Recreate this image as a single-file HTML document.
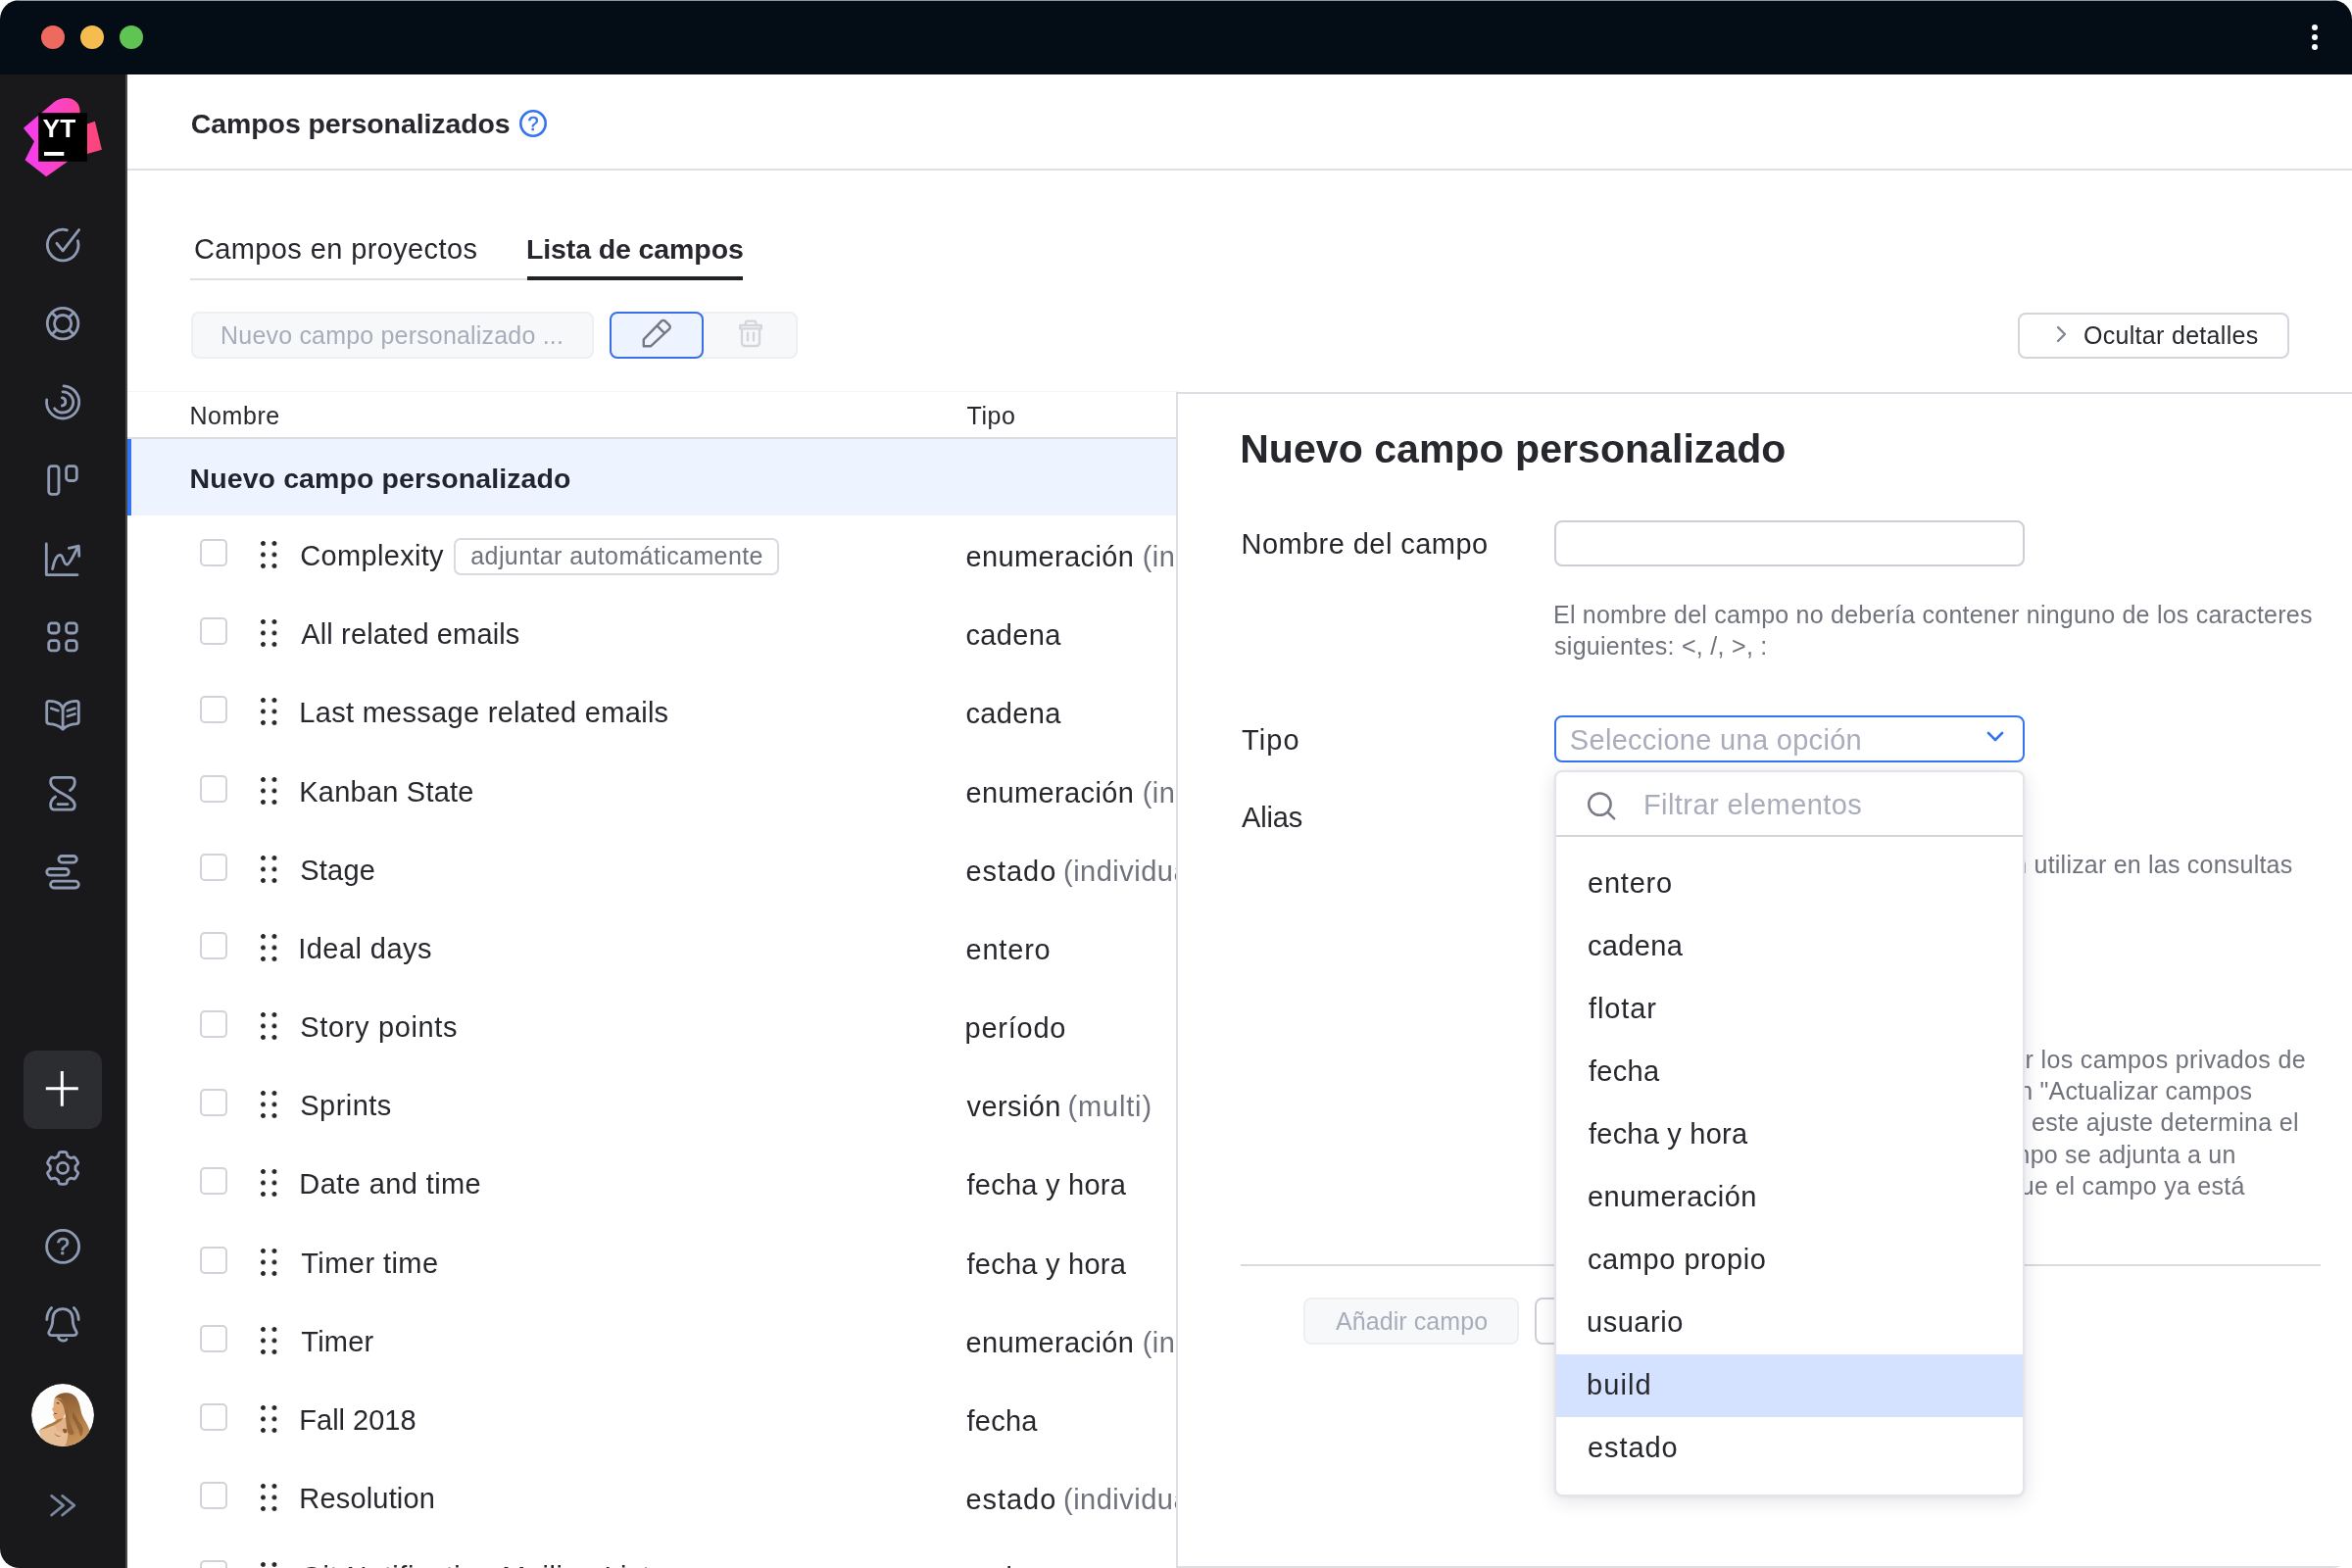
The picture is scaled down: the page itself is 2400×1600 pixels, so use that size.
<!DOCTYPE html>
<html lang="es">
<head>
<meta charset="utf-8">
<title>Campos personalizados</title>
<style>
*{box-sizing:border-box;margin:0;padding:0}
html,body{width:2400px;height:1600px;overflow:hidden;background:#fff}
body{font-family:"Liberation Sans",sans-serif;color:#27282e;position:relative}
.win{will-change:transform;position:absolute;left:0;top:0;width:2400px;height:1600px;border-radius:20px;overflow:hidden;background:#fff}
.abs,.t,.cb,.dh,.ico{position:absolute;display:block}
.t{white-space:nowrap}
.titlebar{left:0;top:0;width:2400px;height:76px;background:#040d15}
.tl{width:24px;height:24px;border-radius:50%;top:26px}
.side{left:0;top:76px;width:130px;height:1524px;background:#19191b;border-right:2px solid #49494c}
.ico{left:44px;width:40px;height:40px;fill:none;stroke:#8d9bb3;stroke-width:3;stroke-linecap:round;stroke-linejoin:round}
.layer{left:0;top:0;width:2400px;height:1600px}
.clipL{left:0;top:0;width:1200px;height:1600px;overflow:hidden}
.cb{left:204px;width:28px;height:28px;border:2px solid #d0d3da;border-radius:5px;background:#fff}
.dh{left:265.7px;width:18px;height:28px;background:
 radial-gradient(circle at 2.5px 2.5px,#27282e 2.1px,transparent 2.7px) 0 0/11.5px 11.5px}
.btn{border-radius:8px}
</style>
</head>
<body>
<div class="win">
  <!-- title bar -->
  <div class="abs titlebar"></div>
  <div class="abs" style="left:0;top:0;width:2400px;height:1.2px;background:#8e959d"></div>
  <i class="abs tl" style="left:42px;background:#ee6a5f"></i>
  <i class="abs tl" style="left:82px;background:#f5bd4f"></i>
  <i class="abs tl" style="left:122px;background:#5fc454"></i>
  <i class="abs" style="left:2359px;top:25px;width:6px;height:6px;border-radius:50%;background:#fff;box-shadow:0 10px 0 #fff,0 20px 0 #fff"></i>

  <!-- sidebar -->
  <div class="abs side"></div>
  <!--SB0-->
  <svg class="abs" style="left:0;top:76px" width="130" height="1524" viewBox="0 76 130 1524" fill="none" stroke="#8f9bb5" stroke-width="2.8" stroke-linecap="round" stroke-linejoin="round">
    <defs>
      <linearGradient id="lg1" x1="24" y1="140" x2="90" y2="140" gradientUnits="userSpaceOnUse"><stop offset="0" stop-color="#f53df2"/><stop offset=".55" stop-color="#fb43c4"/><stop offset="1" stop-color="#ff4690"/></linearGradient>
      <linearGradient id="lg2" x1="89" y1="140" x2="104" y2="140" gradientUnits="userSpaceOnUse"><stop offset="0" stop-color="#ff4585"/><stop offset="1" stop-color="#f9457a"/></linearGradient>
      <linearGradient id="hair" x1="800" y1="300" x2="1250" y2="1450" gradientUnits="userSpaceOnUse"><stop offset="0" stop-color="#8a5c33"/><stop offset=".45" stop-color="#a87643"/><stop offset="1" stop-color="#cf9a60"/></linearGradient>
      <clipPath id="avc"><circle cx="64" cy="1444" r="32"/></clipPath>
    </defs>
    <!-- logo -->
    <g stroke="none">
      <path d="M23.9 130.8 L56 103.6 C62 99.5 70 98.6 76 102.4 C80.5 105.4 82 110 81.6 116 L81.6 150 L69.5 164.6 L47.2 180.2 L25.5 163.3 L35 144.2 Z" fill="url(#lg1)"/>
      <path d="M89 126.4 L96.9 123.8 L103.9 152.8 L89 157 Z" fill="url(#lg2)"/>
      <rect x="39.2" y="115.2" width="49.6" height="49.6" fill="#000"/>
      <rect x="45" y="155" width="20.3" height="3.9" fill="#fff"/>
      <text x="43.6" y="139.8" font-family="Liberation Sans, sans-serif" font-weight="700" font-size="25.5" fill="#fff" textLength="33.6" lengthAdjust="spacingAndGlyphs">YT</text>
    </g>
    <!-- issues -->
    <path d="M68.3 234.8 A15.8 15.8 0 1 0 79.4 245.8 M58 248.3 L64.1 255.9 L80.6 234.5"/>
    <!-- helpdesk -->
    <circle cx="64.1" cy="330.1" r="15.8"/><circle cx="64.1" cy="330.1" r="8.6"/>
    <path d="M52.9 318.9 L58 324 M75.3 318.9 L70.2 324 M52.9 341.3 L58 336.2 M75.3 341.3 L70.2 336.2"/>
    <!-- spiral -->
    <path d="M65 393.8 A16.6 16.6 0 1 1 47.7 408 M64 399.8 A10.6 10.6 0 1 1 55.6 416.8 M63.4 405.9 A4.1 4.1 0 0 1 63.4 414"/>
    <!-- boards -->
    <rect x="49.7" y="475.7" width="10.3" height="28.6" rx="3"/><rect x="67.6" y="475.7" width="10.7" height="14.8" rx="3"/>
    <!-- reports -->
    <path d="M47.3 555 V586.6 H79 M53.6 580.6 C55.5 571 58.5 566 61.5 566.3 C65 566.7 64.5 576.4 68.4 576.2 C71.5 576 76 564 80 557.5 M70.3 559.4 L80.3 557.1 L80.8 567.4"/>
    <!-- projects -->
    <rect x="49.7" y="635.8" width="10.3" height="10.2" rx="3"/><rect x="67.6" y="635.8" width="10.7" height="10.2" rx="3"/>
    <rect x="49.7" y="653.7" width="10.3" height="10.2" rx="3"/><rect x="67.6" y="653.7" width="10.7" height="10.2" rx="3"/>
    <!-- knowledge base -->
    <path d="M64.1 744.2 C61 741 57 738.8 50.5 738.6 C48.7 738.5 47.7 737.6 47.7 736 V718 C47.7 716.3 48.8 715.3 50.5 715.3 C58 715.3 64.1 718.5 64.1 725 V744.2 C67.2 741 71.2 738.8 77.7 738.6 C79.5 738.5 80.3 737.6 80.3 736 V718 C80.3 716.3 79.4 715.3 77.7 715.3 C70.2 715.3 64.1 718.5 64.1 725"/>
    <path d="M52.2 722.8 L59.4 725.2 M68.8 725.3 L76.6 722.8 M68.8 731 L76.6 728.5" stroke-width="2.6"/>
    <!-- timesheets -->
    <path d="M71.5 806.5 C74.5 804.5 76.3 801.5 76.3 798 C76.3 795.3 75 793.3 72.5 793.3 H55.5 C53 793.3 51.6 795.3 51.6 798 C51.6 808 76.3 812 76.3 821.5 C76.3 824.3 75 826.2 72.5 826.2 H55.5 C53 826.2 51.6 824.3 51.6 821.5 C51.6 818 53.6 815 56.6 813 M59 820.6 H69"/>
    <!-- gantt -->
    <rect x="59.9" y="873.5" width="18.4" height="6.6" rx="3.3"/><rect x="47.7" y="886.5" width="22.5" height="6.7" rx="3.35"/><rect x="51.5" y="899.2" width="28.8" height="6.8" rx="3.4"/>
    <!-- create -->
    <rect x="24" y="1072" width="80" height="80" rx="13" fill="#2b2d31" stroke="none"/>
    <path d="M46.8 1110.8 H79.8 M63.3 1093 V1128.8" stroke="#fff" stroke-width="3" stroke-linecap="butt"/>
    <!-- settings -->
    <path d="M77.0 1191.9 L77.0 1192.6 L76.9 1193.2 L77.1 1194.0 L78.0 1194.8 L79.1 1195.9 L79.7 1197.0 L79.4 1197.8 L79.1 1198.6 L78.7 1199.3 L78.3 1200.1 L77.9 1200.8 L77.4 1201.5 L76.8 1202.2 L76.3 1202.9 L75.1 1202.9 L73.6 1202.4 L72.4 1202.1 L71.7 1202.3 L71.1 1202.7 L70.5 1203.1 L70.0 1203.4 L69.3 1203.7 L68.8 1204.2 L68.5 1205.4 L68.1 1206.9 L67.5 1207.9 L66.7 1208.1 L65.8 1208.2 L65.0 1208.3 L64.1 1208.3 L63.2 1208.3 L62.4 1208.2 L61.5 1208.1 L60.7 1207.9 L60.1 1206.9 L59.7 1205.4 L59.4 1204.2 L58.9 1203.7 L58.2 1203.4 L57.6 1203.1 L57.1 1202.7 L56.5 1202.3 L55.8 1202.1 L54.6 1202.4 L53.1 1202.9 L51.9 1202.9 L51.4 1202.2 L50.8 1201.5 L50.3 1200.8 L49.9 1200.1 L49.5 1199.3 L49.1 1198.6 L48.8 1197.8 L48.5 1197.0 L49.1 1195.9 L50.2 1194.8 L51.1 1194.0 L51.3 1193.2 L51.2 1192.6 L51.2 1191.9 L51.2 1191.2 L51.3 1190.6 L51.1 1189.8 L50.2 1189.0 L49.1 1187.9 L48.5 1186.8 L48.8 1186.0 L49.1 1185.2 L49.5 1184.5 L49.9 1183.7 L50.3 1183.0 L50.8 1182.3 L51.4 1181.6 L51.9 1180.9 L53.1 1180.9 L54.6 1181.4 L55.8 1181.7 L56.5 1181.5 L57.1 1181.1 L57.6 1180.7 L58.2 1180.4 L58.9 1180.1 L59.4 1179.6 L59.7 1178.4 L60.1 1176.9 L60.7 1175.9 L61.5 1175.7 L62.4 1175.6 L63.2 1175.5 L64.1 1175.5 L65.0 1175.5 L65.8 1175.6 L66.7 1175.7 L67.5 1175.9 L68.1 1176.9 L68.5 1178.4 L68.8 1179.6 L69.3 1180.1 L70.0 1180.4 L70.5 1180.7 L71.1 1181.1 L71.7 1181.5 L72.4 1181.7 L73.6 1181.4 L75.1 1180.9 L76.3 1180.9 L76.8 1181.6 L77.4 1182.3 L77.9 1183.0 L78.3 1183.7 L78.7 1184.5 L79.1 1185.2 L79.4 1186.0 L79.7 1186.8 L79.1 1187.9 L78.0 1189.0 L77.1 1189.8 L76.9 1190.6 L77.0 1191.2 Z"/>
    <circle cx="64.1" cy="1191.9" r="5.5"/>
    <!-- help -->
    <circle cx="64.1" cy="1271.9" r="16.5"/>
    <text x="64.1" y="1280.4" text-anchor="middle" font-family="Liberation Sans, sans-serif" font-size="24" font-weight="400" fill="#8b98b1" stroke="#8b98b1" stroke-width=".7">?</text>
    <!-- notifications -->
    <path d="M64 1335.6 C57.6 1335.6 53.8 1340 53.8 1346 C53.8 1352.5 52.4 1355 50.4 1358 C49 1360.3 50 1362.7 52.8 1362.7 H75.2 C78 1362.7 79 1360.3 77.6 1358 C75.6 1355 74.2 1352.5 74.2 1346 C74.2 1340 70.4 1335.6 64 1335.6 Z M59.5 1363.4 C59.5 1368.6 66.5 1369.2 68 1366.6 M52.6 1334.4 C49.4 1337.6 47.8 1342 47.8 1346.6 M75.4 1334.4 C78.6 1337.6 80.2 1342 80.2 1346.6"/>
    <!-- avatar -->
    <g stroke="none" clip-path="url(#avc)">
      <circle cx="64" cy="1444" r="32" fill="#fefdfd"/>
      <g transform="translate(28,1408) scale(0.045914)">
        <path d="M250 1130 C330 1080 450 1040 560 1000 L900 940 L1100 1500 L380 1500 Z" fill="#e6bd95"/>
        <path d="M600 430 C640 300 850 250 1000 320 C1120 380 1160 540 1190 690 C1220 850 1330 960 1370 1090 C1400 1250 1270 1400 1100 1520 L820 1520 C900 1350 930 1120 870 900 C850 700 800 500 600 430 Z" fill="url(#hair)"/>
        <path d="M640 860 L900 820 L930 1000 C900 1130 880 1150 840 1180 C740 1200 620 1120 600 985 Z" fill="#e4b288"/>
        <path d="M610 410 C700 370 810 440 835 600 C855 760 810 885 700 905 C640 905 590 865 580 805 L556 775 L588 742 L545 655 L580 600 C578 520 588 450 610 410 Z" fill="#e0aa79"/>
        <path d="M790 850 C720 980 480 1060 270 1120 C400 1000 580 960 670 880 Z" fill="#b07a45"/>
        <path d="M640 430 C760 400 850 480 880 640 C900 800 960 1000 1040 1180 C1000 1260 900 1220 880 1120 C860 980 850 800 820 660 C800 540 740 460 640 430 Z" fill="#9c6a3a"/>
        <path d="M1010 700 C1060 780 1120 900 1200 1000 C1260 1080 1240 1200 1180 1260 C1150 1100 1060 960 1000 840 Z" fill="#7b4c26" opacity=".55"/>
        <path d="M780 1100 C820 1070 880 1090 880 1150 C870 1200 820 1190 800 1160 Z" fill="#8a5a2c"/>
        <path d="M590 1180 C640 1230 700 1250 740 1250 C700 1280 620 1250 590 1180 Z" fill="#a06b3a"/>
        <path d="M640 510 C670 495 700 500 715 520 C690 540 660 540 640 510 Z" fill="#6b3f22"/>
        <path d="M585 745 C610 735 645 735 668 748 C640 772 605 770 585 745 Z" fill="#8c3b2a"/>
      </g>
    </g>
    <!-- expand -->
    <path d="M52.6 1526.4 L64.7 1536.1 L52.6 1546 M63.6 1526.4 L75.8 1536.1 L63.6 1546" stroke="#7b87a0" stroke-width="2.8"/>
  </svg>
<!--SB1-->

  <!-- header -->
  <div class="abs" style="left:130px;top:172px;width:2270px;height:2px;background:#dfe0e5"></div>
  <svg class="abs" style="left:528px;top:110px" width="32" height="32" viewBox="0 0 32 32"><circle cx="16" cy="16" r="12.7" fill="none" stroke="#3574f0" stroke-width="2.6"/><text x="16" y="23" text-anchor="middle" font-family="Liberation Sans, sans-serif" font-size="20" font-weight="400" fill="#3574f0" stroke="#3574f0" stroke-width=".5">?</text></svg>

  <!-- tabs -->
  <div class="abs" style="left:194px;top:284px;width:564px;height:2px;background:#dfe0e5"></div>
  <div class="abs" style="left:538px;top:281.5px;width:220px;height:4.7px;background:#1f2326"></div>

  <!-- toolbar -->
  <div class="abs btn" style="left:194.5px;top:318px;width:411px;height:47.7px;background:#f7f8fa;border:2px solid #eeeff3"></div>
  <div class="abs" style="left:716px;top:318px;width:98px;height:47.7px;background:#f7f8fa;border:2px solid #eeeff3;border-radius:0 8px 8px 0"></div>
  <div class="abs btn" style="left:622px;top:318px;width:96px;height:47.7px;background:#edf3ff;border:2px solid #3b6fe3"></div>
  <svg class="abs" style="left:620px;top:316px" width="200" height="52" viewBox="620 316 200 52" fill="none" stroke-width="2.4" stroke-linejoin="round" stroke-linecap="round">
    <path d="M656.8 353.2 V346.4 L675 327.6 a2.6 2.6 0 0 1 3.7 0 L683 331.9 a2.6 2.6 0 0 1 0 3.7 L664.2 353.2 Z M671.2 333.2 L677.2 339.2" stroke="#747886"/>
    <path d="M755.2 332 H776.8 V335.4 H755.2 Z M760.9 331.4 V329.6 a2 2 0 0 1 2-2 h6.400 a2 2 0 0 1 2 2 V331.4 M757 336.400 V350 a3 3 0 0 0 3 3 H772 a3 3 0 0 0 3-3 V336.400 M763 339.600 V347.400 M769 339.600 V347.400" stroke="#d3d5db"/>
  </svg>
  <div class="abs btn" style="left:2058.5px;top:318.5px;width:277px;height:47px;background:#fff;border:2px solid #d3d5db"></div>
  <svg class="abs" style="left:2094px;top:328px" width="20" height="26" viewBox="0 0 20 26" fill="none" stroke="#818594" stroke-width="2.4" stroke-linecap="round" stroke-linejoin="round"><path d="M6 6 L13 13 L6 20"/></svg>

  <!-- table -->
  <div class="abs" style="left:130px;top:398.5px;width:1072px;height:1.5px;background:#f5f5f8"></div>
  <div class="abs" style="left:130px;top:446px;width:1072px;height:2px;background:#dbdce2"></div>
  <div class="abs" style="left:130px;top:448px;width:1072px;height:78px;background:#edf3ff"></div>
  <div class="abs" style="left:130px;top:448px;width:4px;height:78px;background:#3574f0"></div>
<span class="t" style="left:194.80px;top:112.47px;font-size:28.5px;line-height:28.5px;letter-spacing:-0.100px;color:#27282e;font-weight:700;">Campos personalizados</span>
<span class="t" style="left:197.90px;top:240.05px;font-size:29px;line-height:29px;letter-spacing:0.389px;color:#27282e;">Campos en proyectos</span>
<span class="t" style="left:536.90px;top:240.47px;font-size:28.5px;line-height:28.5px;letter-spacing:-0.100px;color:#27282e;font-weight:700;">Lista de campos</span>
<span class="t" style="left:225.10px;top:329.94px;font-size:25px;line-height:25px;letter-spacing:0.182px;color:#a9acba;">Nuevo campo personalizado ...</span>
<span class="t" style="left:2126.00px;top:329.74px;font-size:25px;line-height:25px;letter-spacing:0.300px;color:#27282e;">Ocultar detalles</span>
<span class="t" style="left:193.50px;top:411.74px;font-size:25px;line-height:25px;letter-spacing:0.560px;color:#27282e;">Nombre</span>
<span class="t" style="left:986.50px;top:411.74px;font-size:25px;line-height:25px;letter-spacing:0.567px;color:#27282e;">Tipo</span>
<span class="t" style="left:193.50px;top:474.47px;font-size:28.5px;line-height:28.5px;letter-spacing:0.104px;color:#1f2430;font-weight:700;">Nuevo campo personalizado</span>
  <div class="abs clipL">
    <div class="abs" style="left:462.5px;top:549px;width:332.5px;height:38px;border:2px solid #d8dae0;border-radius:7px;background:#fff"></div>
<i class="cb" style="top:550.0px"></i><i class="dh" style="top:552.0px"></i>
<i class="cb" style="top:630.2px"></i><i class="dh" style="top:632.2px"></i>
<i class="cb" style="top:710.3px"></i><i class="dh" style="top:712.3px"></i>
<i class="cb" style="top:790.5px"></i><i class="dh" style="top:792.5px"></i>
<i class="cb" style="top:870.7px"></i><i class="dh" style="top:872.7px"></i>
<i class="cb" style="top:950.9px"></i><i class="dh" style="top:952.9px"></i>
<i class="cb" style="top:1031.0px"></i><i class="dh" style="top:1033.0px"></i>
<i class="cb" style="top:1111.2px"></i><i class="dh" style="top:1113.2px"></i>
<i class="cb" style="top:1191.4px"></i><i class="dh" style="top:1193.4px"></i>
<i class="cb" style="top:1271.5px"></i><i class="dh" style="top:1273.5px"></i>
<i class="cb" style="top:1351.7px"></i><i class="dh" style="top:1353.7px"></i>
<i class="cb" style="top:1431.9px"></i><i class="dh" style="top:1433.9px"></i>
<i class="cb" style="top:1512.0px"></i><i class="dh" style="top:1514.0px"></i>
<i class="cb" style="top:1592.2px"></i><i class="dh" style="top:1594.2px"></i>
<span class="t" style="left:306.30px;top:553.05px;font-size:29px;line-height:29px;letter-spacing:0.322px;color:#27282e;">Complexity</span>
<span class="t" style="left:985.50px;top:554.05px;font-size:29px;line-height:29px;letter-spacing:0.380px;color:#27282e;">enumeración</span>
<span class="t" style="left:1165.70px;top:554.05px;font-size:29px;line-height:29px;letter-spacing:0.500px;color:#70727c;">(individual)</span>
<span class="t" style="left:307.30px;top:633.22px;font-size:29px;line-height:29px;letter-spacing:0.129px;color:#27282e;">All related emails</span>
<span class="t" style="left:985.50px;top:634.22px;font-size:29px;line-height:29px;letter-spacing:0.360px;color:#27282e;">cadena</span>
<span class="t" style="left:305.30px;top:713.39px;font-size:29px;line-height:29px;letter-spacing:0.296px;color:#27282e;">Last message related emails</span>
<span class="t" style="left:985.50px;top:714.39px;font-size:29px;line-height:29px;letter-spacing:0.360px;color:#27282e;">cadena</span>
<span class="t" style="left:305.30px;top:793.56px;font-size:29px;line-height:29px;letter-spacing:0.218px;color:#27282e;">Kanban State</span>
<span class="t" style="left:985.50px;top:794.56px;font-size:29px;line-height:29px;letter-spacing:0.380px;color:#27282e;">enumeración</span>
<span class="t" style="left:1165.70px;top:794.56px;font-size:29px;line-height:29px;letter-spacing:0.500px;color:#70727c;">(individual)</span>
<span class="t" style="left:306.30px;top:873.73px;font-size:29px;line-height:29px;letter-spacing:0.200px;color:#27282e;">Stage</span>
<span class="t" style="left:985.50px;top:874.73px;font-size:29px;line-height:29px;letter-spacing:0.940px;color:#27282e;">estado</span>
<span class="t" style="left:1085.00px;top:874.73px;font-size:29px;line-height:29px;letter-spacing:0.500px;color:#70727c;">(individual)</span>
<span class="t" style="left:304.30px;top:953.90px;font-size:29px;line-height:29px;letter-spacing:0.433px;color:#27282e;">Ideal days</span>
<span class="t" style="left:985.50px;top:954.90px;font-size:29px;line-height:29px;letter-spacing:0.800px;color:#27282e;">entero</span>
<span class="t" style="left:306.30px;top:1034.07px;font-size:29px;line-height:29px;letter-spacing:0.645px;color:#27282e;">Story points</span>
<span class="t" style="left:984.50px;top:1035.07px;font-size:29px;line-height:29px;letter-spacing:0.767px;color:#27282e;">período</span>
<span class="t" style="left:306.30px;top:1114.24px;font-size:29px;line-height:29px;letter-spacing:0.450px;color:#27282e;">Sprints</span>
<span class="t" style="left:986.50px;top:1115.24px;font-size:29px;line-height:29px;letter-spacing:0.417px;color:#27282e;">versión</span>
<span class="t" style="left:1089.50px;top:1115.24px;font-size:29px;line-height:29px;letter-spacing:0.833px;color:#70727c;">(multi)</span>
<span class="t" style="left:305.30px;top:1194.41px;font-size:29px;line-height:29px;letter-spacing:0.408px;color:#27282e;">Date and time</span>
<span class="t" style="left:986.50px;top:1195.41px;font-size:29px;line-height:29px;letter-spacing:0.245px;color:#27282e;">fecha y hora</span>
<span class="t" style="left:307.30px;top:1274.58px;font-size:29px;line-height:29px;letter-spacing:0.433px;color:#27282e;">Timer time</span>
<span class="t" style="left:986.50px;top:1275.58px;font-size:29px;line-height:29px;letter-spacing:0.245px;color:#27282e;">fecha y hora</span>
<span class="t" style="left:307.30px;top:1354.75px;font-size:29px;line-height:29px;letter-spacing:0.225px;color:#27282e;">Timer</span>
<span class="t" style="left:985.50px;top:1355.75px;font-size:29px;line-height:29px;letter-spacing:0.380px;color:#27282e;">enumeración</span>
<span class="t" style="left:1165.70px;top:1355.75px;font-size:29px;line-height:29px;letter-spacing:0.500px;color:#70727c;">(individual)</span>
<span class="t" style="left:305.30px;top:1434.92px;font-size:29px;line-height:29px;letter-spacing:0.000px;color:#27282e;">Fall 2018</span>
<span class="t" style="left:986.50px;top:1435.92px;font-size:29px;line-height:29px;letter-spacing:0.250px;color:#27282e;">fecha</span>
<span class="t" style="left:305.30px;top:1515.09px;font-size:29px;line-height:29px;letter-spacing:0.178px;color:#27282e;">Resolution</span>
<span class="t" style="left:985.50px;top:1516.09px;font-size:29px;line-height:29px;letter-spacing:0.940px;color:#27282e;">estado</span>
<span class="t" style="left:1085.00px;top:1516.09px;font-size:29px;line-height:29px;letter-spacing:0.500px;color:#70727c;">(individual)</span>
<span class="t" style="left:306.30px;top:1595.26px;font-size:29px;line-height:29px;letter-spacing:0.543px;color:#27282e;">Git Notification Mailing List</span>
<span class="t" style="left:985.50px;top:1596.26px;font-size:29px;line-height:29px;letter-spacing:0.360px;color:#27282e;">cadena</span>
<span class="t" style="left:480.30px;top:555.44px;font-size:25px;line-height:25px;letter-spacing:0.396px;color:#70727c;">adjuntar automáticamente</span>
  </div>

  <!-- detail panel -->
  <div class="abs" style="left:1200px;top:400px;width:1220px;height:1200px;background:#fff;border:2px solid #dddde3"></div>
  <div class="abs btn" style="left:1586px;top:530.5px;width:479.5px;height:47px;border:2px solid #cdcfd6;background:#fff"></div>
  <div class="abs btn" style="left:1586px;top:810px;width:479.5px;height:47px;border:2px solid #cdcfd6;background:#fff"></div>
  <div class="abs" style="left:1266px;top:1289.5px;width:1102px;height:2px;background:#d8dae0"></div>
  <div class="abs btn" style="left:1330px;top:1324.3px;width:220px;height:47.5px;background:#f7f8fa;border:2px solid #eeeff3"></div>
  <div class="abs btn" style="left:1566px;top:1324.3px;width:160px;height:47.5px;background:#fff;border:2px solid #cdcfd6"></div>
  <i class="cb" style="left:1586px;top:1040px"></i>
  <div class="abs btn" style="left:1585.5px;top:730px;width:480.5px;height:47.5px;border:2.5px solid #3574f0;background:#fff"></div>
<span class="t" style="left:1265.20px;top:438.19px;font-size:41px;line-height:41px;letter-spacing:0.054px;color:#27282e;font-weight:700;">Nuevo campo personalizado</span>
<span class="t" style="left:1266.50px;top:540.75px;font-size:29px;line-height:29px;letter-spacing:0.440px;color:#27282e;">Nombre del campo</span>
<span class="t" style="left:1585.00px;top:614.54px;font-size:25px;line-height:25px;letter-spacing:0.222px;color:#70727c;">El nombre del campo no debería contener ninguno de los caracteres</span>
<span class="t" style="left:1586.00px;top:646.54px;font-size:25px;line-height:25px;letter-spacing:0.290px;color:#70727c;">siguientes: &lt;, /, &gt;, :</span>
<span class="t" style="left:1267.00px;top:740.75px;font-size:29px;line-height:29px;letter-spacing:1.067px;color:#27282e;">Tipo</span>
<span class="t" style="left:1601.80px;top:740.75px;font-size:29px;line-height:29px;letter-spacing:0.305px;color:#a9acba;">Seleccione una opción</span>
<span class="t" style="left:1267.00px;top:820.05px;font-size:29px;line-height:29px;letter-spacing:-0.150px;color:#27282e;">Alias</span>
<span class="t" style="left:1363.00px;top:1336.14px;font-size:25px;line-height:25px;letter-spacing:0.082px;color:#a9acba;">Añadir campo</span>
<span class="t" style="left:1597.50px;top:1336.14px;font-size:25px;line-height:25px;letter-spacing:0.500px;color:#27282e;">Cancelar</span>
<span class="t" style="left:1744.02px;top:870.14px;font-size:25px;line-height:25px;letter-spacing:0.217px;color:#70727c;">Lista de alias que se pueden utilizar en las consultas</span>
<span class="t" style="left:1705.57px;top:1069.14px;font-size:25px;line-height:25px;letter-spacing:0.357px;color:#70727c;">Marque esta opción para ocultar los campos privados de</span>
<span class="t" style="left:1644.18px;top:1101.14px;font-size:25px;line-height:25px;letter-spacing:0.206px;color:#70727c;">los usuarios que no tienen permiso en "Actualizar campos</span>
<span class="t" style="left:1706.13px;top:1133.14px;font-size:25px;line-height:25px;letter-spacing:0.309px;color:#70727c;">privados". Tenga en cuenta que este ajuste determina el</span>
<span class="t" style="left:1636.74px;top:1165.64px;font-size:25px;line-height:25px;letter-spacing:0.236px;color:#70727c;">estado predeterminado cuando el campo se adjunta a un</span>
<span class="t" style="left:1663.37px;top:1197.64px;font-size:25px;line-height:25px;letter-spacing:0.267px;color:#70727c;">proyecto. En los proyectos en los que el campo ya está</span>
<span class="t" style="left:1607.50px;top:1229.64px;font-size:25px;line-height:25px;letter-spacing:0.300px;color:#70727c;">adjunto, este ajuste no cambia.</span>
  <svg class="abs" style="left:2024px;top:741px" width="24" height="22" viewBox="0 0 24 22" fill="none" stroke="#3574f0" stroke-width="2.6" stroke-linecap="round" stroke-linejoin="round"><path d="M5 7 L12 14 L19 7"/></svg>

  <!-- popup -->
  <div class="abs" style="left:1586px;top:785.5px;width:480px;height:741.5px;background:#fff;border:2px solid #e3e4e9;border-radius:8px;box-shadow:0 4px 20px rgba(0,20,60,.12),0 1px 3px rgba(0,20,60,.06)"></div>
  <div class="abs" style="left:1588px;top:852px;width:476px;height:2px;background:#d3d5db"></div>
  <div class="abs" style="left:1588px;top:1382px;width:476px;height:64px;background:#d4e2ff"></div>
  <svg class="abs" style="left:1616px;top:804px" width="36" height="36" viewBox="0 0 36 36" fill="none" stroke="#797b86" stroke-width="2.5" stroke-linecap="round"><circle cx="16.4" cy="16.6" r="11.2"/><path d="M24.6 24.8 L31.2 31.4"/></svg>
<span class="t" style="left:1676.90px;top:807.25px;font-size:29px;line-height:29px;letter-spacing:0.438px;color:#a9acba;">Filtrar elementos</span>
<span class="t" style="left:1620.00px;top:887.05px;font-size:29px;line-height:29px;letter-spacing:0.780px;color:#27282e;">entero</span>
<span class="t" style="left:1620.00px;top:951.05px;font-size:29px;line-height:29px;letter-spacing:0.340px;color:#27282e;">cadena</span>
<span class="t" style="left:1621.00px;top:1015.05px;font-size:29px;line-height:29px;letter-spacing:0.900px;color:#27282e;">flotar</span>
<span class="t" style="left:1621.00px;top:1079.05px;font-size:29px;line-height:29px;letter-spacing:0.275px;color:#27282e;">fecha</span>
<span class="t" style="left:1621.00px;top:1143.05px;font-size:29px;line-height:29px;letter-spacing:0.227px;color:#27282e;">fecha y hora</span>
<span class="t" style="left:1620.00px;top:1207.05px;font-size:29px;line-height:29px;letter-spacing:0.480px;color:#27282e;">enumeración</span>
<span class="t" style="left:1620.00px;top:1271.05px;font-size:29px;line-height:29px;letter-spacing:0.555px;color:#27282e;">campo propio</span>
<span class="t" style="left:1619.00px;top:1335.05px;font-size:29px;line-height:29px;letter-spacing:0.533px;color:#27282e;">usuario</span>
<span class="t" style="left:1619.00px;top:1399.05px;font-size:29px;line-height:29px;letter-spacing:1.075px;color:#27282e;">build</span>
<span class="t" style="left:1620.00px;top:1463.05px;font-size:29px;line-height:29px;letter-spacing:0.900px;color:#27282e;">estado</span>
</div>
</body>
</html>
